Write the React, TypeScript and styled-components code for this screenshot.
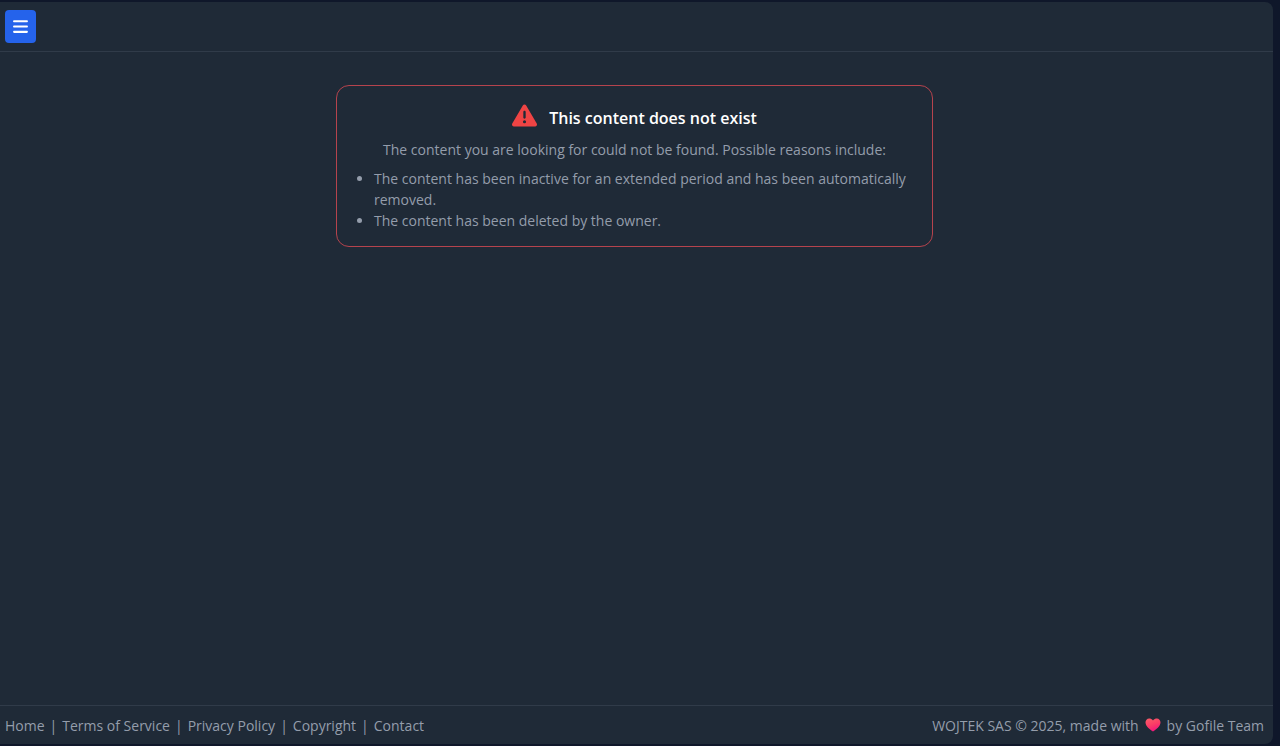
import React from "react";
import styled, { createGlobalStyle } from "styled-components";
import { FaBars, FaTriangleExclamation } from "react-icons/fa6";

const GlobalStyle = createGlobalStyle`
  *, *::before, *::after {
    box-sizing: border-box;
  }

  body {
    margin: 0;
    background: #0f172a;
    color: #949dab;
    font-family: "Segoe UI", "Open Sans", "Noto Sans", sans-serif;
    font-size: 14px;
    line-height: 21px;
  }
`;

const Page = styled.div`
  display: flex;
  min-height: 100vh;
  padding: 2px 7px 2px 0;
`;

const Panel = styled.div`
  display: flex;
  flex: 1;
  flex-direction: column;
  background: #1f2a37;
  border-radius: 0 8px 8px 0;
`;

const Header = styled.header`
  display: flex;
  align-items: center;
  height: 50px;
  padding: 0 5px;
  border-bottom: 1px solid #303b49;
`;

const MenuButton = styled.button`
  display: flex;
  align-items: center;
  justify-content: center;
  width: 31px;
  height: 33px;
  padding: 0;
  border: 0;
  border-radius: 4px;
  background: #2563eb;
  color: #ffffff;
  font-size: 17px;
  cursor: pointer;
`;

const Main = styled.main`
  flex: 1;
  padding: 33px 20px 33px 16px;
`;

const Alert = styled.section`
  max-width: 597px;
  margin: 0 auto;
  padding: 18px 16px 15px;
  border: 1px solid #b5434d;
  border-radius: 13px;
`;

const AlertHeading = styled.div`
  display: flex;
  align-items: center;
  justify-content: center;
  gap: 12px;
  height: 28px;
  margin-bottom: 7px;
`;

const AlertIcon = styled(FaTriangleExclamation)`
  width: 25px;
  height: 25px;
  margin-bottom: 6px;
  color: #ef4444;
`;

const Title = styled.h1`
  margin: 0;
  color: #ffffff;
  font-size: 16px;
  font-weight: 600;
  line-height: 28px;
`;

const Lead = styled.p`
  margin: 0 0 8px;
  text-align: center;
`;

const Reasons = styled.ul`
  margin: 0;
  padding-left: 21px;
`;

const Footer = styled.footer`
  display: flex;
  flex-wrap: wrap;
  align-items: center;
  justify-content: space-between;
  min-height: 39px;
  padding: 0 9px 0 5px;
  border-top: 1px solid #303b49;
`;

const LinkList = styled.nav`
  display: flex;
  gap: 5px;
`;

const FooterLink = styled.a`
  color: inherit;
  text-decoration: none;
`;

const Credit = styled.div`
  display: flex;
  align-items: center;
  gap: 6px;
`;

const links = ["Home", "Terms of Service", "Privacy Policy", "Copyright", "Contact"];

function Heart() {
  return (
    <svg width="16" height="14" viewBox="0 0 16 14" role="img" aria-label="love">
      <defs>
        <linearGradient id="heart" x1="0.2" y1="0" x2="0.6" y2="1">
          <stop offset="0" stopColor="#fb5a68" />
          <stop offset="0.5" stopColor="#f93d66" />
          <stop offset="1" stopColor="#f0127f" />
        </linearGradient>
      </defs>
      <path
        fill="url(#heart)"
        d="M8 2.6C6.9.9 5.500.5 4.200.5 2 .5.500 2.200.500 4.500c0 3.700 4.500 7 7.500 9 3-2 7.500-5.300 7.500-9C15.500 2.200 14 .5 11.800.5 10.500.5 9.100.9 8 2.600z"
      />
    </svg>
  );
}

export default function App() {
  return (
    <>
      <GlobalStyle />
      <Page>
        <Panel>
          <Header>
            <MenuButton type="button" aria-label="Open menu">
              <FaBars />
            </MenuButton>
          </Header>
          <Main>
            <Alert>
              <AlertHeading>
                <AlertIcon aria-hidden="true" />
                <Title>This content does not exist</Title>
              </AlertHeading>
              <Lead>The content you are looking for could not be found. Possible reasons include:</Lead>
              <Reasons>
                <li>The content has been inactive for an extended period and has been automatically removed.</li>
                <li>The content has been deleted by the owner.</li>
              </Reasons>
            </Alert>
          </Main>
          <Footer>
            <LinkList aria-label="Footer">
              {links.map((label, index) => (
                <React.Fragment key={label}>
                  {index > 0 && <span aria-hidden="true">|</span>}
                  <FooterLink href="#">{label}</FooterLink>
                </React.Fragment>
              ))}
            </LinkList>
            <Credit>
              <span>WOJTEK SAS © 2025, made with</span>
              <Heart />
              <span>by Gofile Team</span>
            </Credit>
          </Footer>
        </Panel>
      </Page>
    </>
  );
}
